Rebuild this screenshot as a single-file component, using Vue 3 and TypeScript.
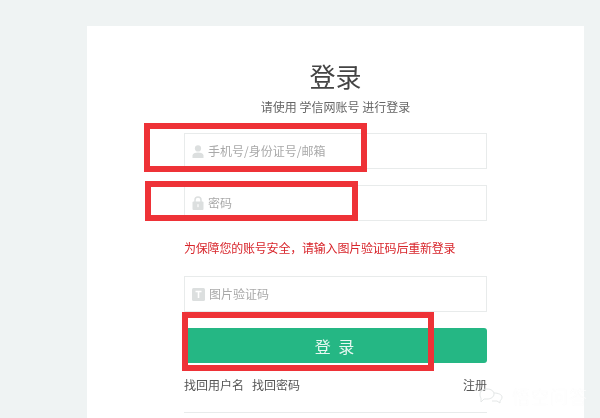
<script setup lang="ts">
interface Link { label: string }
const links: Link[] = [{ label: '找回用户名' }, { label: '找回密码' }]
</script>

<template>
  <div class="page">
    <main class="card">
      <h1 class="title">登录</h1>
      <p class="subtitle">请使用 学信网账号 进行登录</p>

      <div class="field first">
        <svg class="icon" viewBox="0 0 12 13" width="12" height="13">
          <circle cx="6" cy="3.4" r="3.1" fill="#dcdfdf" />
          <path d="M0.5 13V10.6C0.5 8.6 3 7.6 6 7.6S11.5 8.6 11.5 10.6V13Z" fill="#dcdfdf" />
        </svg>
        <span class="placeholder">手机号/身份证号/邮箱</span>
      </div>

      <div class="field second">
        <svg class="icon" viewBox="0 0 12 14" width="12" height="14">
          <path d="M3 6V4A3 3 0 0 1 9 4V6" fill="none" stroke="#dcdfdf" stroke-width="1.5" />
          <rect x="0.5" y="5.5" width="11" height="8.5" rx="1" fill="#dcdfdf" />
          <rect x="5.4" y="8.2" width="1.2" height="3" fill="#fff" />
        </svg>
        <span class="placeholder">密码</span>
      </div>

      <p class="error">为保障您的账号安全，请输入图片验证码后重新登录</p>

      <div class="field third">
        <svg class="icon" viewBox="0 0 13 13" width="13" height="13">
          <rect width="13" height="13" rx="1.5" fill="#dcdfdf" />
          <path d="M3.5 3.5H9.5M6.5 3.5V10" stroke="#fff" stroke-width="1.6" fill="none" />
        </svg>
        <span class="placeholder">图片验证码</span>
      </div>

      <button class="submit" type="button">登 录</button>

      <div class="links">
        <a v-for="link in links" :key="link.label" class="link">{{ link.label }}</a>
        <a class="link register">注册</a>
      </div>
      <div class="rule"></div>
    </main>

    <div class="mark one"></div>
    <div class="mark two"></div>
    <div class="mark three"></div>

    <div class="watermark">
      <svg viewBox="0 0 24 16" width="24" height="16">
        <path d="M1 6C1 3 4 1 8 1S15 3 15 6 12 11 8 11H5L2 14V10C1 9 1 7 1 6Z" fill="none" stroke="#e4e7e7" stroke-width="1" />
        <path d="M15 5C19 5 23 6.500 23 9S21.500 12 21 13V15L18 13H13" fill="none" stroke="#e4e7e7" stroke-width="1" />
      </svg>
      <span>悟空问答</span>
    </div>
  </div>
</template>

<style>
html, body { margin: 0; background: #eff3f3; }
</style>

<style scoped>
.page {
  position: relative;
  width: 600px;
  height: 418px;
  overflow: hidden;
  background: #eff3f3;
  font-family: "Noto Sans CJK SC", "Liberation Sans", sans-serif;
  filter: blur(0.35px);
}
.card {
  box-sizing: border-box;
  width: 497px;
  height: 392px;
  margin: 26px 0 0 87px;
  padding: 0 97px 0 97px;
  background: #fff;
  display: flex;
  flex-direction: column;
}
.title {
  margin: 33px 0 0;
  height: 34px;
  line-height: 34px;
  font-size: 26px;
  font-weight: 400;
  text-align: center;
  color: #444;
}
.subtitle {
  margin: 5px 0 0;
  height: 18px;
  line-height: 18px;
  font-size: 12px;
  text-align: center;
  color: #666;
}
.field {
  box-sizing: border-box;
  height: 36px;
  border: 1px solid #e8ebeb;
  display: flex;
  align-items: center;
  padding-left: 7px;
  gap: 4px;
}
.first { margin-top: 17px; }
.second { margin-top: 16px; }
.third { margin-top: 19px; }
.icon { flex: none; }
.placeholder {
  font-size: 12px;
  line-height: 16px;
  margin-bottom: 1px;
  color: #a9a9a9;
}
.error {
  margin: 18px 0 0;
  height: 18px;
  line-height: 18px;
  font-size: 12px;
  letter-spacing: -0.2px;
  color: #d8262c;
}
.submit {
  margin-top: 16px;
  height: 35px;
  border: 0;
  border-radius: 3px;
  background: #25b784;
  color: #e8f7f1;
  font: inherit;
  font-size: 16px;
  letter-spacing: 2px;
  padding: 0;
}
.links {
  margin-top: 13px;
  height: 18px;
  display: flex;
  gap: 8px;
  font-size: 12px;
  line-height: 18px;
  color: #555;
}
.register { margin-left: auto; }
.rule {
  margin-top: 18px;
  height: 1px;
  background: #e8ebeb;
}
.mark {
  position: absolute;
  box-sizing: border-box;
  border: 6px solid #ee3237;
}
.one { left: 144px; top: 123px; width: 223px; height: 49px; }
.two { left: 145px; top: 181px; width: 213px; height: 40px; }
.three { left: 182px; top: 312px; width: 252px; height: 59px; }
.watermark {
  position: absolute;
  left: 479px;
  top: 385px;
  display: flex;
  align-items: center;
  gap: 9px;
  color: #fff;
  font-size: 18px;
  font-weight: 300;
  line-height: 22px;
  letter-spacing: 1px;
  white-space: nowrap;
  text-shadow: 0 0 1px rgba(0, 0, 0, 0.05);
}
</style>
